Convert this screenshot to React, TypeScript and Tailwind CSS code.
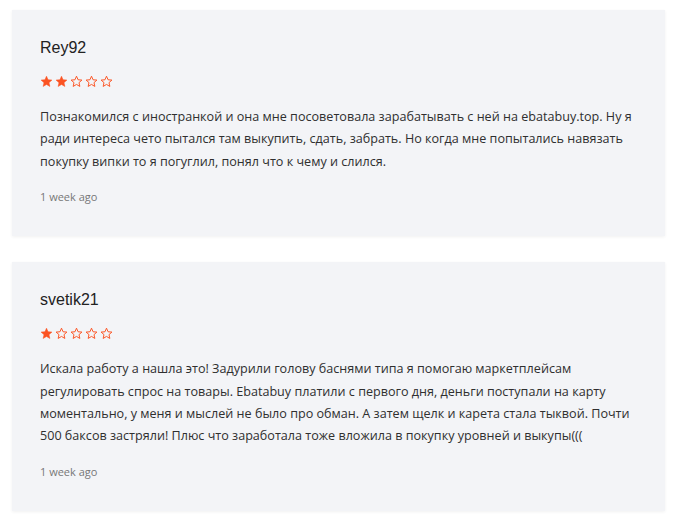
import React from "react";

type Review = {
  author: string;
  rating: number;
  text: string;
  when: string;
};

const reviews: Review[] = [
  {
    author: "Rey92",
    rating: 2,
    text: "Познакомился с иностранкой и она мне посоветовала зарабатывать с ней на ebatabuy.top. Ну я ради интереса чето пытался там выкупить, сдать, забрать. Но когда мне попытались навязать покупку випки то я погуглил, понял что к чему и слился.",
    when: "1 week ago",
  },
  {
    author: "svetik21",
    rating: 1,
    text: "Искала работу а нашла это! Задурили голову баснями типа я помогаю маркетплейсам регулировать спрос на товары. Ebatabuy платили с первого дня, деньги поступали на карту моментально, у меня и мыслей не было про обман. А затем щелк и карета стала тыквой. Почти 500 баксов застряли! Плюс что заработала тоже вложила в покупку уровней и выкупы(((",
    when: "1 week ago",
  },
];

function Star({ filled }: { filled: boolean }) {
  return (
    <svg width="13" height="13" viewBox="0 0 24 24" className="shrink-0">
      <path
        d="M12 2.2l2.9 6.6 7.1.6-5.4 4.7 1.6 7-6.2-3.7-6.2 3.7 1.6-7L2 9.4l7.1-.6z"
        fill={filled ? "#fb5323" : "none"}
        stroke="#fb5323"
        strokeWidth={filled ? 1 : 1.8}
        strokeLinejoin="round"
      />
    </svg>
  );
}

function ReviewCard({ review }: { review: Review }) {
  return (
    <div className="bg-[#f3f4f7] px-7 pt-7 pb-[31px] shadow-[0_1px_3px_rgba(0,0,0,0.06)]">
      <div className="text-[16px] leading-5 text-[#222] font-['Liberation_Sans',Arial,sans-serif]">
        {review.author}
      </div>
      <div className="mt-4 flex gap-[2px] h-[14px] items-center">
        {[0, 1, 2, 3, 4].map((i) => (
          <Star key={i} filled={i < review.rating} />
        ))}
      </div>
      <p className="mt-[18px] text-[12.6px] leading-[22.4px] text-[#2f2f2f] font-['Open_Sans',sans-serif]">
        {review.text}
      </p>
      <div className="mt-4 text-[11px] leading-4 text-[#777] font-['Open_Sans',sans-serif]">
        {review.when}
      </div>
    </div>
  );
}

export default function App() {
  return (
    <div className="w-[680px] h-[522px] bg-white pt-[10px] pl-3 pr-[15px]">
      <div className="flex flex-col gap-[26px]">
        {reviews.map((r) => (
          <ReviewCard key={r.author} review={r} />
        ))}
      </div>
    </div>
  );
}
